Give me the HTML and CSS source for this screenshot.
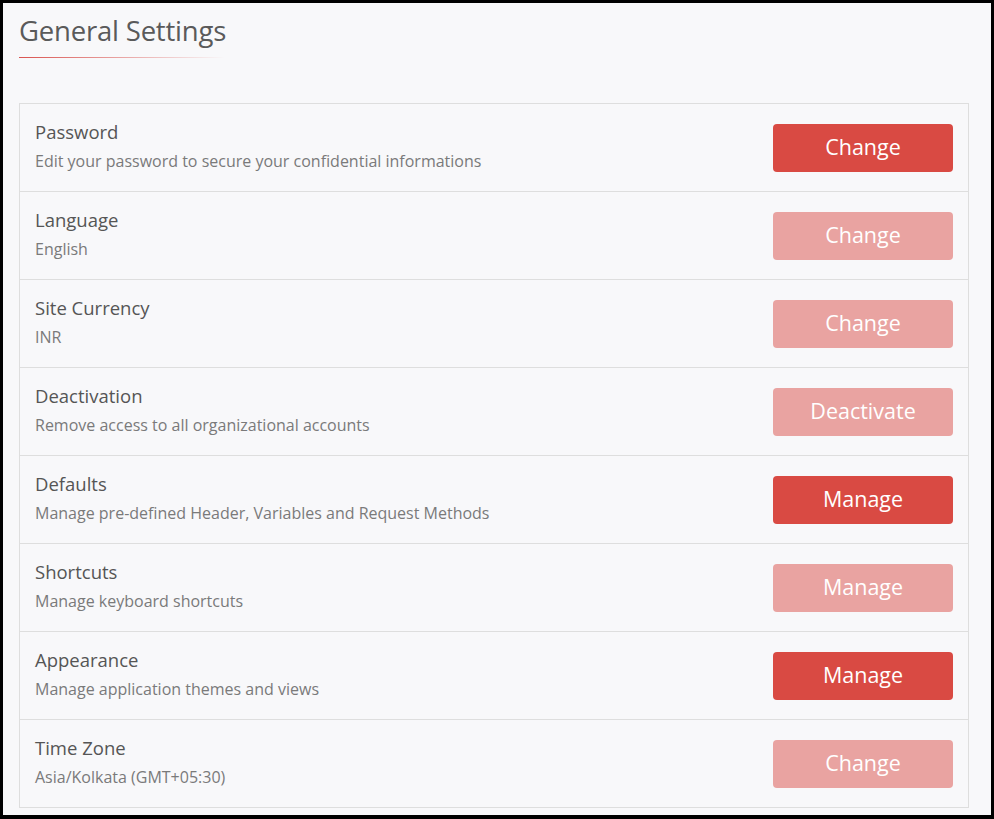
FILE: index.html
```html
<!DOCTYPE html>
<html>
<head>
<meta charset="utf-8">
<link rel="stylesheet" href="styles.css">
</head>
<body>
<div class="frame">
  <div class="page">
    <h1 class="title">General Settings</h1>
    <div class="title-rule"></div>
    <div class="card">
      <div class="row">
        <div class="info"><div class="name">Password</div><div class="desc">Edit your password to secure your confidential informations</div></div>
        <button class="btn">Change</button>
      </div>
      <div class="row">
        <div class="info"><div class="name">Language</div><div class="desc">English</div></div>
        <button class="btn btn-muted">Change</button>
      </div>
      <div class="row">
        <div class="info"><div class="name">Site Currency</div><div class="desc">INR</div></div>
        <button class="btn btn-muted">Change</button>
      </div>
      <div class="row">
        <div class="info"><div class="name">Deactivation</div><div class="desc">Remove access to all organizational accounts</div></div>
        <button class="btn btn-muted">Deactivate</button>
      </div>
      <div class="row">
        <div class="info"><div class="name">Defaults</div><div class="desc">Manage pre-defined Header, Variables and Request Methods</div></div>
        <button class="btn">Manage</button>
      </div>
      <div class="row">
        <div class="info"><div class="name">Shortcuts</div><div class="desc">Manage keyboard shortcuts</div></div>
        <button class="btn btn-muted">Manage</button>
      </div>
      <div class="row">
        <div class="info"><div class="name">Appearance</div><div class="desc">Manage application themes and views</div></div>
        <button class="btn">Manage</button>
      </div>
      <div class="row">
        <div class="info"><div class="name">Time Zone</div><div class="desc">Asia/Kolkata (GMT+05:30)</div></div>
        <button class="btn btn-muted">Change</button>
      </div>
    </div>
  </div>
</div>
</body>
</html>
```
FILE: styles.css
```css
* { box-sizing: border-box; }
html, body { margin: 0; padding: 0; }
body { font-family: "Open Sans", "Noto Sans", sans-serif; }
.frame {
  width: 994px;
  height: 819px;
  border: 3px solid #000;
  border-bottom-width: 4px;
  background: #f8f8fa;
}
.page { padding: 11px 22px 0 16px; }
.title {
  margin: 0;
  font-size: 27.5px;
  font-weight: 400;
  line-height: 34px;
  color: #5a5a5a;
  letter-spacing: -0.2px;
}
.title-rule {
  margin-top: 9px;
  width: 206px;
  height: 1px;
  background: linear-gradient(to right, #d9534f, rgba(217,83,79,0.45) 55%, rgba(217,83,79,0));
}
.card {
  margin-top: 45px;
  border: 1px solid #dedede;
  border-bottom: none;
}
.row {
  height: 88px;
  border-bottom: 1px solid #dedede;
  display: flex;
  align-items: center;
  justify-content: space-between;
  padding: 0 15px 0 15px;
}
.info { display: flex; flex-direction: column; gap: 8px; margin-bottom: 4px; }
.name { font-size: 18.5px; color: #555; line-height: 22px; }
.desc { font-size: 16px; color: #7a7a7a; line-height: 20px; }
.btn {
  width: 180px;
  height: 48px;
  border: none;
  border-radius: 4px;
  background: #d94a43;
  color: #fff;
  font-family: inherit;
  font-size: 21.5px;
  padding: 0 0 3px 0;
  margin-top: 1px;
}
.btn-muted { background: #e9a3a1; }
```
